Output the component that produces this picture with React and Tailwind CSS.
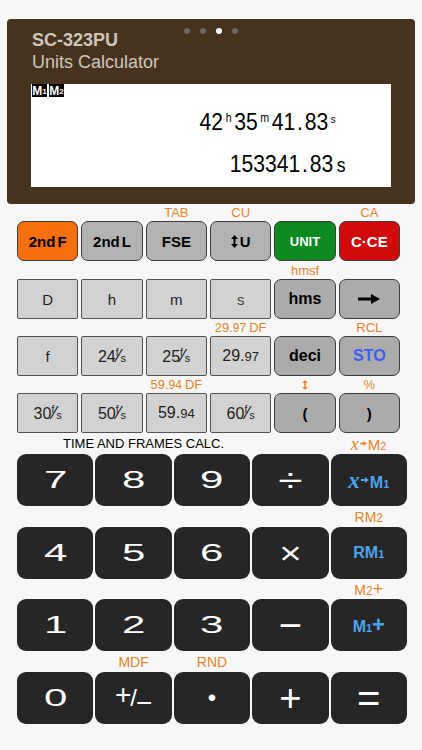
import React from "react";

const smallKey = {
  flat: "bg-[#d2d2d2] border-[1.5px] border-[#525252] rounded-[2px] text-[#1e1e1e] text-[15px]",
  gray: "bg-[#b3b3b3] border border-[#3c3c3c] rounded-[7px] text-black font-bold text-[15px]",
  dgray: "bg-[#ababab] border border-[#3c3c3c] rounded-[7px] text-black font-bold text-[15px]",
  orange: "bg-[#f86f0e] border border-[#3c3c3c] rounded-[7px] text-black font-bold text-[15px]",
  green: "bg-[#0b8a1f] border border-[#3c3c3c] rounded-[7px] text-white font-bold text-[13px]",
  red: "bg-[#d10b0b] border border-[#3c3c3c] rounded-[7px] text-white font-bold text-[15px]",
};

function Fps({ n }) {
  return (
    <span className="flex items-baseline text-[16px] leading-none">
      <span>{n}</span>
      <span className="relative -top-[6px] text-[10px]">f</span>
      <span className="-ml-[1px] text-[18px]">⁄</span>
      <span className="text-[11px]">s</span>
    </span>
  );
}

function Dec({ a, b }) {
  return (
    <span className="flex items-baseline leading-none">
      <span className="text-[16px]">{a}</span>
      <span className="text-[13px]">{b}</span>
    </span>
  );
}

function DfLabel({ a, b }) {
  return (
    <span className="flex items-baseline">
      <span>{a}.</span>
      <span className="text-[12px]">{b}</span>
      <span className="ml-[3px]">DF</span>
    </span>
  );
}

function Arrow() {
  return (
    <svg width="22" height="10" viewBox="0 0 22 10">
      <rect x="0" y="3.5" width="14" height="3" fill="#000" />
      <path d="M13 0 L22 5 L13 10 Z" fill="#000" />
    </svg>
  );
}

// small right arrow used in x→M keys
function MiniArrow({ w = 8, h = 6 }) {
  return (
    <svg width={w} height={h} viewBox="0 0 8 6" className="mx-[1px] self-center" fill="currentColor">
      <rect x="0" y="2" width="4.5" height="2" />
      <path d="M4 0 L8 3 L4 6 Z" />
    </svg>
  );
}

// double headed vertical arrow
function UpDown({ h = 13, w = 7 }) {
  return (
    <svg width={w} height={h} viewBox="0 0 7 13" fill="currentColor">
      <rect x="2.5" y="3" width="2" height="7" />
      <path d="M3.5 0 L7 4 L0 4 Z" />
      <path d="M3.5 13 L7 9 L0 9 Z" />
    </svg>
  );
}

const smallRows = [
  {
    lh: "h-[17px]",
    labels: ["", "", "TAB", "CU", "", "CA"],
    keys: [
      ["orange", <>2nd<span className="ml-[2px]">F</span></>],
      ["gray", <>2nd<span className="ml-[2px]">L</span></>],
      ["gray", "FSE"],
      ["gray", <><span className="mr-[2px]"><UpDown /></span>U</>],
      ["green", "UNIT"],
      ["red", "C·CE"],
    ],
  },
  {
    lh: "h-[18px]",
    labels: ["", "", "", "", "hmsf", ""],
    keys: [
      ["flat", "D"],
      ["flat", "h"],
      ["flat", "m"],
      ["flat", <span className="text-[#444]">s</span>],
      ["dgray", <span className="text-[16px]">hms</span>],
      ["dgray", <Arrow />],
    ],
  },
  {
    lh: "h-[17px]",
    labels: ["", "", "", <DfLabel a="29" b="97" />, "", "RCL"],
    keys: [
      ["flat", "f"],
      ["flat", <Fps n="24" />],
      ["flat", <Fps n="25" />],
      ["flat", <Dec a="29." b="97" />],
      ["dgray", <span className="text-[16px]">deci</span>],
      ["dgray", <span className="text-[16px] text-[#3b5ff0]">STO</span>],
    ],
  },
  {
    lh: "h-[17px]",
    labels: ["", "", <DfLabel a="59" b="94" />, "", <UpDown h={10} w={6} />, "%"],
    keys: [
      ["flat", <Fps n="30" />],
      ["flat", <Fps n="50" />],
      ["flat", <Dec a="59." b="94" />],
      ["flat", <Fps n="60" />],
      ["dgray", "("],
      ["dgray", ")"],
    ],
  },
];

function Wide({ children, cls = "text-[24px] scale-x-[1.75]" }) {
  return <span className={`inline-block leading-none ${cls}`}>{children}</span>;
}

function XM({ n, color, bold }) {
  return (
    <span className={`flex items-baseline leading-none ${color} ${bold ? "font-bold" : ""}`}>
      <span className={`font-['Liberation_Serif',serif] italic ${bold ? "text-[23px]" : "text-[18px]"}`}>x</span>
      {bold ? <MiniArrow /> : <MiniArrow w={7} h={5} />}
      <span className={bold ? "text-[16px]" : "text-[15px]"}>M</span>
      <span className="text-[11px]">{n}</span>
    </span>
  );
}

const blue = "text-[#4ea3ee]";

const bigRows = [
  {
    lh: "h-[21px]",
    labels: null,
    keys: [
      <Wide>7</Wide>,
      <Wide>8</Wide>,
      <Wide>9</Wide>,
      <Wide cls="text-[34px] scale-x-[1.3]">÷</Wide>,
      <XM n="1" color={blue} bold />,
    ],
  },
  {
    lh: "h-[21px]",
    labels: ["", "", "", "", <span className="flex items-baseline">RM<span className="text-[12px]">2</span></span>],
    keys: [
      <Wide>4</Wide>,
      <Wide>5</Wide>,
      <Wide>6</Wide>,
      <Wide cls="text-[32px] scale-x-[1.2]">×</Wide>,
      <span className={`flex items-baseline font-bold leading-none ${blue}`}>
        <span className="text-[16px]">RM</span>
        <span className="text-[11px]">1</span>
      </span>,
    ],
  },
  {
    lh: "h-[20px]",
    labels: ["", "", "", "", <span className="flex items-baseline">M<span className="text-[12px]">2</span><span className="text-[18px]">+</span></span>],
    keys: [
      <Wide>1</Wide>,
      <Wide>2</Wide>,
      <Wide>3</Wide>,
      <Wide cls="text-[40px]">−</Wide>,
      <span className={`flex items-baseline font-bold leading-none ${blue}`}>
        <span className="text-[16px]">M</span>
        <span className="text-[11px]">1</span>
        <span className="text-[22px]">+</span>
      </span>,
    ],
  },
  {
    lh: "h-[21px]",
    labels: ["", "MDF", "RND", "", ""],
    keys: [
      <Wide>0</Wide>,
      <span className="flex items-center leading-none">
        <span className="relative -top-[3px] text-[28px]">+</span>
        <span className="-mx-[1px] text-[24px]">/</span>
        <span className="relative top-[5px] text-[28px]">−</span>
      </span>,
      <span className="text-[24px] leading-none">•</span>,
      <Wide cls="text-[38px]">+</Wide>,
      <Wide cls="text-[40px]">=</Wide>,
    ],
  },
];

function Badge({ n }) {
  return (
    <span className="flex h-[13px] w-[15px] items-center justify-center bg-black text-[12px] font-bold leading-none text-white">
      M<span className="mt-[2px] text-[8px]">{n}</span>
    </span>
  );
}

export default function App() {
  return (
    <div className="h-[750px] w-[422px] overflow-hidden bg-[#f7f7f7] font-['Liberation_Sans','DejaVu_Sans',Arial,sans-serif]">
      <div className="px-[7px] pt-[19px]">
        <div className="relative h-[185px] rounded-[4px] bg-[#47331d] pl-[24px] pt-[12px]">
          <div className="absolute left-[177px] top-[9px] flex gap-[10px]">
            <span className="h-[6px] w-[6px] rounded-full bg-[#71675c]" />
            <span className="h-[6px] w-[6px] rounded-full bg-[#71675c]" />
            <span className="h-[6px] w-[6px] rounded-full bg-white" />
            <span className="h-[6px] w-[6px] rounded-full bg-[#71675c]" />
          </div>
          <div className="pl-[1px] text-[18px] font-bold leading-none text-[#cdc6bc]">SC-323PU</div>
          <div className="mt-[4px] pl-[1px] text-[18px] leading-none text-[#cdc6bc]">Units Calculator</div>

          {/* display */}
          <div className="mt-[13px] h-[103px] w-[360px] bg-white text-black">
            <div className="flex gap-[2px] pl-[1px]">
              <Badge n="1" />
              <Badge n="2" />
            </div>
            <div className="mt-[13px] flex justify-end pr-[55px]">
              <span className="inline-flex origin-right scale-x-[0.88] items-start leading-none">
                <span className="text-[24px]">42</span>
                <span className="ml-[3px] mr-[3px] mt-[2px] text-[12px]">h</span>
                <span className="text-[24px]">35</span>
                <span className="ml-[3px] mr-[3px] mt-[2px] text-[12px]">m</span>
                <span className="text-[24px]">41<span className="mx-[2px]">.</span>83</span>
                <span className="ml-[3px] mt-[4px] text-[11px]">s</span>
              </span>
            </div>
            <div className="mt-[18px] flex justify-end pr-[46px]">
              <span className="inline-flex origin-right scale-x-[0.88] items-baseline leading-none">
                <span className="text-[24px]">153341<span className="mx-[2px]">.</span>83</span>
                <span className="ml-[4px] text-[20px]">s</span>
              </span>
            </div>
          </div>
        </div>
      </div>

      {/* small function keys */}
      <div className="ml-[17px] w-[383px]">
        {smallRows.map((row, ri) => (
          <div key={ri} className="grid grid-cols-6 gap-x-[3px]">
            {row.keys.map(([v, content], ci) => (
              <div key={ci} className="flex flex-col">
                <div className={`${row.lh} flex items-center justify-center whitespace-nowrap text-[13px] leading-none text-[#e8832a]`}>
                  {row.labels[ci]}
                </div>
                <div className={`flex h-[40px] items-center justify-center leading-none ${smallKey[v]}`}>{content}</div>
              </div>
            ))}
          </div>
        ))}
      </div>

      {/* main keys */}
      <div className="ml-[17px] w-[390px]">
        {bigRows.map((row, ri) => (
          <div key={ri}>
            {row.labels ? (
              <div className={`grid grid-cols-5 gap-x-[2px] ${row.lh}`}>
                {row.labels.map((l, ci) => (
                  <div key={ci} className="flex items-center justify-center whitespace-nowrap text-[14px] leading-none text-[#e8832a]">
                    {l}
                  </div>
                ))}
              </div>
            ) : (
              <div className={`flex items-center ${row.lh}`}>
                <div className="pl-[46px] text-[13px] leading-none text-black">TIME AND FRAMES CALC.</div>
                <div className="ml-auto flex w-[77px] justify-center">
                  <XM n="2" color="text-[#e8832a]" />
                </div>
              </div>
            )}
            <div className="grid grid-cols-5 gap-x-[2px]">
              {row.keys.map((k, ci) => (
                <div key={ci} className="flex h-[52px] items-center justify-center rounded-[9px] bg-[#262626] text-white">
                  {k}
                </div>
              ))}
            </div>
          </div>
        ))}
      </div>
    </div>
  );
}
